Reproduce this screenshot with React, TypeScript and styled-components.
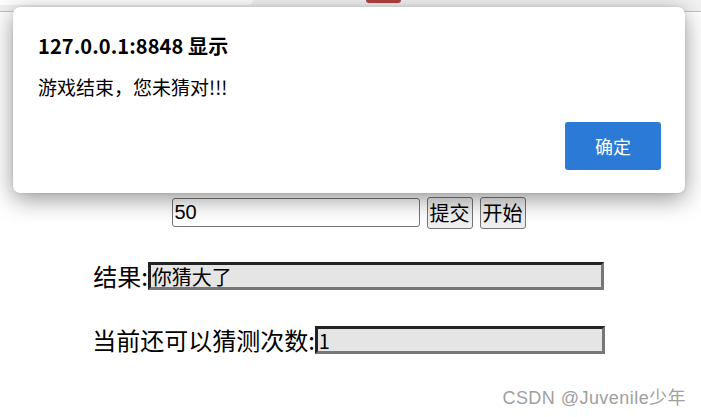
import React from "react";
import styled, { createGlobalStyle } from "styled-components";

const GlobalStyle = createGlobalStyle`
  html, body {
    margin: 0;
    padding: 0;
    background: #ffffff;
  }
  body {
    font-family: "Noto Sans CJK SC", "Liberation Sans", sans-serif;
  }
`;

const Page = styled.div`
  position: relative;
  width: 701px;
  height: 417px;
  overflow: hidden;
  background: #ffffff;
`;

const TopStrip = styled.div`
  display: flex;
  align-items: flex-start;
  height: 11px;
  background: #f2f2f2;
  border-bottom: 1px solid #c4c4c4;
`;

const Tab = styled.div`
  width: 253px;
  height: 5px;
  background: #ffffff;
  border-bottom-right-radius: 5px;
`;

const RedMark = styled.div`
  margin-left: 113px;
  width: 35px;
  height: 3px;
  background: #b2423f;
  border-radius: 0 0 3px 3px;
`;

const Content = styled.div`
  display: flex;
  flex-direction: column;
  align-items: center;
  padding-top: 184px;
  padding-right: 4px;
`;

const GuessRow = styled.div`
  display: flex;
  align-items: center;
  gap: 7px;
  height: 33px;
`;

const GuessInput = styled.input`
  box-sizing: border-box;
  width: 248px;
  height: 29px;
  margin: 0;
  padding: 0 2px;
  font-family: "Liberation Sans", "Noto Sans CJK SC", sans-serif;
  font-size: 20px;
  color: #000;
  background: #ffffff;
  border: 1px solid #767676;
  border-radius: 3px;
  outline: none;
`;

const PlainButton = styled.button`
  box-sizing: border-box;
  height: 32px;
  margin: 0;
  padding: 0 2px;
  font-family: "Noto Sans CJK SC", sans-serif;
  font-size: 20px;
  line-height: 1;
  color: #000;
  background: #efefef;
  border: 1px solid #767676;
  border-radius: 3px;
`;

const FieldRow = styled.div<{ $top: number }>`
  display: flex;
  align-items: center;
  margin-top: ${(p) => p.$top}px;
  height: 28px;
`;

const FieldLabel = styled.span`
  font-family: "Noto Sans CJK SC", sans-serif;
  font-size: 24px;
  line-height: 28px;
  color: #000;
`;

const FieldBox = styled.input<{ $width: number }>`
  box-sizing: border-box;
  width: ${(p) => p.$width}px;
  height: 28px;
  margin: 0;
  padding: 0 1px;
  font-family: "Noto Sans CJK SC", "Liberation Sans", sans-serif;
  font-size: 20px;
  color: #000;
  background: #e5e5e5;
  border-style: solid;
  border-width: 3px;
  border-color: #222222 #777777 #777777 #222222;
  outline: none;
`;

const Dialog = styled.div`
  position: absolute;
  top: 7px;
  left: 13px;
  box-sizing: border-box;
  width: 672px;
  height: 186px;
  padding: 25px 24px 23px 25px;
  display: flex;
  flex-direction: column;
  background: #ffffff;
  border-radius: 7px;
  box-shadow: 0 6px 24px rgba(0, 0, 0, 0.42), 0 0 3px rgba(0, 0, 0, 0.12);
`;

const DialogTitle = styled.div`
  font-family: "Noto Sans CJK SC", "Liberation Sans", sans-serif;
  font-weight: 700;
  font-size: 20px;
  line-height: 28px;
  letter-spacing: 0.1px;
  color: #000;
`;

const DialogMessage = styled.div`
  margin-top: 14px;
  font-family: "Noto Sans CJK SC", "Liberation Sans", sans-serif;
  font-size: 19px;
  line-height: 26px;
  color: #000;
`;

const DialogFooter = styled.div`
  margin-top: auto;
  display: flex;
  justify-content: flex-end;
`;

const ConfirmButton = styled.button`
  width: 96px;
  height: 48px;
  margin: 0;
  padding: 0;
  font-family: "Noto Sans CJK SC", sans-serif;
  font-size: 18px;
  color: #ffffff;
  background: #2b7bd6;
  border: none;
  border-radius: 3px;
`;

const Watermark = styled.div`
  position: absolute;
  right: 15px;
  bottom: 8px;
  font-family: "Liberation Sans", "Noto Sans CJK SC", sans-serif;
  font-size: 18px;
  line-height: 22px;
  letter-spacing: 0.45px;
  color: #a0a0a0;
  text-shadow: 0 0 1px rgba(255, 255, 255, 0.8);
`;

export default function App() {
  return (
    <>
      <GlobalStyle />
      <Page>
        <TopStrip>
          <Tab />
          <RedMark />
        </TopStrip>

        <Content>
          <GuessRow>
            <GuessInput type="text" defaultValue="50" />
            <PlainButton>提交</PlainButton>
            <PlainButton>开始</PlainButton>
          </GuessRow>

          <FieldRow $top={33}>
            <FieldLabel>结果:</FieldLabel>
            <FieldBox $width={456} readOnly defaultValue="你猜大了" />
          </FieldRow>

          <FieldRow $top={36}>
            <FieldLabel>当前还可以猜测次数:</FieldLabel>
            <FieldBox $width={290} readOnly defaultValue="1" />
          </FieldRow>
        </Content>

        <Dialog>
          <DialogTitle>127.0.0.1:8848 显示</DialogTitle>
          <DialogMessage>游戏结束，您未猜对!!!</DialogMessage>
          <DialogFooter>
            <ConfirmButton>确定</ConfirmButton>
          </DialogFooter>
        </Dialog>

        <Watermark>CSDN @Juvenile少年</Watermark>
      </Page>
    </>
  );
}
